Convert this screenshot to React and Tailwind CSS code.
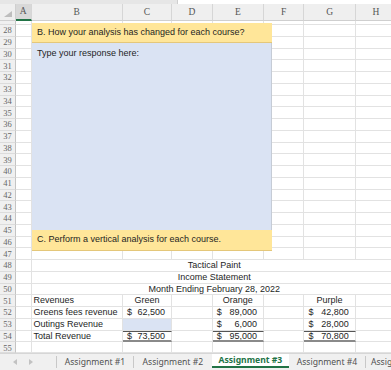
import clsx from 'clsx';

const GRID = 'grid grid-cols-[16px_15.5px_91.5px_49px_40.7px_51.3px_40.5px_51.2px_41.5px]';
const LETTERS = ['A', 'B', 'C', 'D', 'E', 'F', 'G', 'H'];

function RowHead({ n, from = 'center' }) {
  return (
    <div
      className={clsx(
        'flex flex-col overflow-hidden bg-[#f0f0f0] border-r border-r-[#c4c4c4] border-b border-b-[#dcdcdc]',
        from === 'end' && 'justify-end',
        from === 'start' && 'justify-start',
        from === 'center' && 'justify-center'
      )}
    >
      <div className="h-[11.75px] shrink-0 flex items-center justify-center font-['Liberation_Serif',serif] text-[8.5px] text-[#666] leading-none">
        {n}
      </div>
    </div>
  );
}

function Cell({ className = '', children }) {
  return (
    <div className={clsx('flex items-center overflow-hidden whitespace-nowrap leading-none border-r border-b border-[#e2e2e2]', className)}>
      {children}
    </div>
  );
}

function Row({ n, h = 'h-[11.75px]', from, children }) {
  return (
    <div className={clsx(GRID, h)}>
      <RowHead n={n} from={from} />
      {children ?? LETTERS.map((l) => <Cell key={l} />)}
    </div>
  );
}

function Money({ v, total }) {
  return (
    <Cell
      className={clsx(
        'justify-between pl-[4px] pr-[6px]',
        total && 'border-t border-t-[#555] border-b-2 border-b-[#8a8a8a]'
      )}
    >
      <span>$</span>
      <span>{v}</span>
    </Cell>
  );
}

function Title({ n, text }) {
  return (
    <Row n={n}>
      <Cell />
      <Cell className="col-span-7 justify-center border-r-0">{text}</Cell>
    </Row>
  );
}

function Tab({ label, w, active }) {
  if (active) {
    return (
      <div className={clsx('shrink-0 flex items-center justify-center whitespace-nowrap bg-white border-b-2 border-[#217346] mb-[2px] font-bold text-[#217346]', w)}>
        {label}
      </div>
    );
  }
  return <div className={clsx('shrink-0 flex items-center justify-center whitespace-nowrap', w)}>{label}</div>;
}

const Sep = () => <div className="shrink-0 w-px h-[12px] self-center bg-[#c8c8c8]" />;

export default function App() {
  const emptyRows = [];
  for (let n = 28; n <= 47; n++) emptyRows.push(<Row key={n} n={n} />);

  return (
    <div className="relative w-[391px] h-[370px] overflow-hidden bg-white font-['Liberation_Sans',Arial,sans-serif] text-[9px] text-[#1e1e1e]">
      {/* formula bar strip */}
      <div className="flex h-[4px]">
        <div className="w-[177px] bg-[#e6e6e6]" />
        <div className="flex-1 bg-white border-l border-[#cfcfcf]" />
      </div>

      {/* column headers */}
      <div className={clsx(GRID, 'h-[17px] bg-[#efefef]')}>
        <div className="flex items-end justify-end pr-[3px] pb-[3px] border-r border-b border-[#cfcfcf]">
          <svg width="8" height="6" viewBox="0 0 8 6">
            <polygon points="8,0 8,6 0,6" fill="#bdbdbd" />
          </svg>
        </div>
        {LETTERS.map((l) => (
          <div
            key={l}
            className={clsx(
              "flex items-center justify-center font-['Liberation_Serif',serif] text-[9.5px] text-[#555] border-r border-[#d6d6d6]",
              l === 'A' ? 'bg-[#d8d8d8] border-b-2 border-b-[#217346]' : 'border-b border-b-[#cfcfcf]'
            )}
          >
            {l}
          </div>
        ))}
      </div>

      {/* sheet */}
      <Row n={27} h="h-[4.2px]" from="end" />
      {emptyRows}
      <Title n={48} text="Tactical Paint" />
      <Title n={49} text="Income Statement" />
      <Title n={50} text="Month Ending February 28, 2022" />
      <Row n={51}>
        <Cell />
        <Cell className="pl-[2px]">Revenues</Cell>
        <Cell className="justify-center">Green</Cell>
        <Cell />
        <Cell className="justify-center">Orange</Cell>
        <Cell />
        <Cell className="justify-center">Purple</Cell>
        <Cell />
      </Row>
      <Row n={52}>
        <Cell />
        <Cell className="pl-[2px]">Greens fees revenue</Cell>
        <Money v="62,500" />
        <Cell />
        <Money v="89,000" />
        <Cell />
        <Money v="42,800" />
        <Cell />
      </Row>
      <Row n={53}>
        <Cell />
        <Cell className="pl-[2px]">Outings Revenue</Cell>
        <Cell className="bg-[#dae3f3]" />
        <Cell />
        <Money v="6,000" />
        <Cell />
        <Money v="28,000" />
        <Cell />
      </Row>
      <Row n={54}>
        <Cell />
        <Cell className="pl-[2px]">Total Revenue</Cell>
        <Money v="73,500" total />
        <Cell />
        <Money v="95,000" total />
        <Cell />
        <Money v="70,800" total />
        <Cell />
      </Row>
      <Row n={55} h="h-[10.55px]" from="start" />

      {/* sheet tabs */}
      <div className="flex h-[17px] bg-[#f0f0f0] border-t border-[#d6d6d6] font-['Noto_Sans',sans-serif] text-[8.6px] text-[#505050]">
        <div className="shrink-0 w-[56px] flex items-center gap-[12px] pl-[13px]">
          <svg width="4" height="6" viewBox="0 0 4 6"><polygon points="4,0 4,6 0,3" fill="#c2c2c2" /></svg>
          <svg width="4" height="6" viewBox="0 0 4 6"><polygon points="0,0 0,6 4,3" fill="#c2c2c2" /></svg>
        </div>
        <Sep />
        <Tab label="Assignment #1" w="w-[76px]" />
        <Sep />
        <Tab label="Assignment #2" w="w-[77.7px]" />
        <Tab label="Assignment #3" w="w-[77.3px]" active />
        <Tab label="Assignment #4" w="w-[76px]" />
        <Sep />
        <div className="shrink-0 flex items-center pl-[5px] whitespace-nowrap">Assignment #5</div>
      </div>

      {/* floating text boxes */}
      <div className="absolute left-[31.5px] top-[23px] w-[240.5px] h-[20.3px] flex items-center pl-[5.5px] bg-[#ffe699] border-b border-[#e4c77a]">
        B. How your analysis has changed for each course?
      </div>
      <div className="absolute left-[31.5px] top-[43.3px] w-[240.5px] h-[186.7px] pl-[5.5px] pt-[4px] bg-[#dae3f3] border-r border-[#c6ccd6]">
        Type your response here:
      </div>
      <div className="absolute left-[31.5px] top-[230px] w-[240.5px] h-[20.7px] flex items-center pl-[5.5px] bg-[#ffe699] border-b border-[#e4c77a]">
        C. Perform a vertical analysis for each course.
      </div>
    </div>
  );
}
